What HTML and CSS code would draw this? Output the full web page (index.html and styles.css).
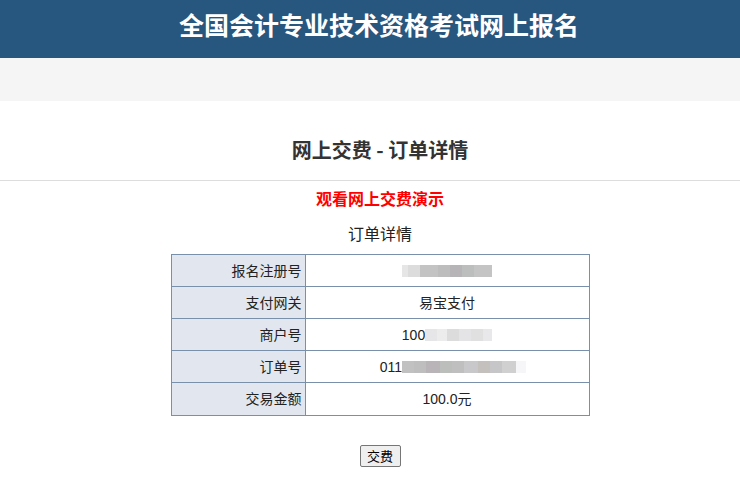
FILE: index.html
```html
<!DOCTYPE html>
<html lang="zh-CN">
<head>
<meta charset="utf-8">
<title>订单详情</title>
<link rel="stylesheet" href="styles.css">
</head>
<body>
<header class="top">全国会计专业技术资格考试网上报名</header>
<div class="band"></div>
<main class="page">
  <h1 class="title">网上交费 - 订单详情</h1>
  <hr class="rule">
  <a class="demo" href="#">观看网上交费演示</a>
  <div class="caption">订单详情</div>
  <table class="detail">
    <tr><td class="label">报名注册号</td><td class="value"><span class="mask mask-a"></span></td></tr>
    <tr><td class="label">支付网关</td><td class="value">易宝支付</td></tr>
    <tr><td class="label">商户号</td><td class="value">100<span class="mask mask-b"></span></td></tr>
    <tr><td class="label">订单号</td><td class="value"><span class="shift">011<span class="mask mask-c"></span></span></td></tr>
    <tr><td class="label last">交易金额</td><td class="value">100.0元</td></tr>
  </table>
  <div class="actions"><button class="pay" type="button">交费</button></div>
</main>
</body>
</html>
```
FILE: styles.css
```css
html, body {
  margin: 0;
  padding: 0;
  background: #ffffff;
}
body {
  font-family: "Liberation Sans", "Noto Sans CJK SC", sans-serif;
  color: #222;
}
.top {
  box-sizing: border-box;
  height: 58px;
  padding: 9px 0 0 18px;
  background: #27567f;
  color: #ffffff;
  font-family: "Noto Sans CJK SC", sans-serif;
  font-weight: bold;
  font-size: 25px;
  line-height: 30px;
  text-align: center;
}
.band {
  height: 43px;
  background: #f5f5f5;
}
.page {
  display: flex;
  flex-direction: column;
  align-items: center;
  padding-left: 20px;
}
.title {
  margin: 35px 0 0;
  font-family: "Noto Sans CJK SC", sans-serif;
  font-size: 20px;
  line-height: 28px;
  font-weight: bold;
  color: #333;
}
.rule {
  align-self: stretch;
  margin: 16px 0 0 -20px;
  border: 0;
  border-top: 1px solid #dddddd;
  height: 0;
}
.demo {
  margin-top: 7px;
  font-family: "Noto Sans CJK SC", sans-serif;
  font-size: 16px;
  line-height: 20px;
  font-weight: bold;
  color: #ff0000;
  text-decoration: none;
}
.caption {
  margin-top: 15px;
  font-family: "Noto Sans CJK SC", sans-serif;
  font-size: 16px;
  line-height: 20px;
  color: #222;
}
.detail {
  margin-top: 11px;
  width: 419px;
  border-collapse: collapse;
  font-size: 14px;
}
.detail td {
  border: 1px solid #7890aa;
  height: 31px;
  padding: 0;
  line-height: 16px;
}
.detail td.last {
  height: 32px;
}
.label {
  width: 130px;
  padding-right: 3px !important;
  text-align: right;
  background: #e2e7ef;
}
.value {
  text-align: center;
  background: #ffffff;
}
.mask {
  display: inline-block;
  height: 12px;
  vertical-align: -1px;
}
.mask-a {
  width: 90px;
  background: linear-gradient(90deg,
    #e6e6e6 0 6px, #dcdcdc 6px 18px, #c3c3c3 18px 36px, #bdbdbd 36px 48px,
    #b7b4b7 48px 60px, #bcbebe 60px 72px, #c4c4c4 72px 90px);
}
.mask-b {
  width: 67px;
  background: linear-gradient(90deg,
    #e6e6e8 0 12px, #ececec 12px 22px, #dcdcdc 22px 34px, #e4e4e6 34px 46px,
    #e0e0e0 46px 58px, #e8e8ea 58px 67px);
}
.shift {
  display: inline-block;
  margin-left: 12px;
}
.mask-c {
  width: 124px;
  background: linear-gradient(90deg,
    #c2c1c2 0 12px, #bdbebd 12px 24px, #b8b4b8 24px 38px, #bcbebc 38px 50px,
    #bfbfbf 50px 62px, #c8c8ca 62px 76px, #c3c0bd 76px 88px, #c6c6c8 88px 100px,
    #d0d0d0 100px 114px, #f6f6f8 114px 124px);
}
.actions {
  margin-top: 29px;
}
.pay {
  font-family: "Noto Sans CJK SC", sans-serif;
  font-size: 13px;
  line-height: 16px;
  width: 41px;
  height: 22px;
  padding: 0;
  background: #efefef;
  border: 1px solid #767676;
  border-radius: 2px;
  color: #000;
}
```
